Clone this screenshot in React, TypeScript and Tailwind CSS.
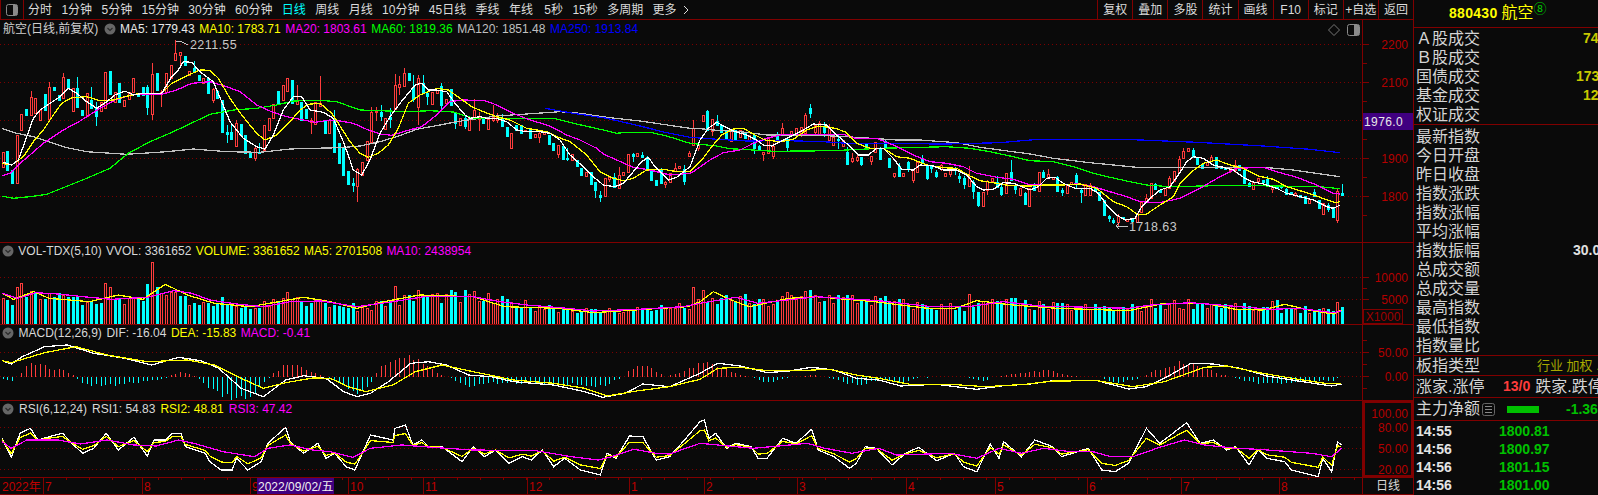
type Pt = [number, number];
type Seg = [number, number, number, number, number[]];

// chart data was read off crops: each segment is offset + scale + flat x,y list
function build(segs: Seg[]): Pt[] {
  const out: Pt[] = [];
  for (const [ox, oy, sx, sy, f] of segs) {
    for (let i = 0; i < f.length; i += 2) {
      const p: Pt = [ox + f[i] / sx, oy + f[i + 1] / sy];
      if (!out.length || p[0] > out[out.length - 1][0]) out.push(p);
    }
  }
  return out;
}

function at(line: Pt[], x: number) {
  if (x <= line[0][0]) return line[0][1];
  for (let i = 1; i < line.length; i++) {
    if (x <= line[i][0]) {
      const [x0, y0] = line[i - 1];
      const [x1, y1] = line[i];
      return y0 + ((y1 - y0) * (x - x0)) / (x1 - x0);
    }
  }
  return line[line.length - 1][1];
}

const toPts = (line: Pt[]) => line.map(([x, y]) => `${x.toFixed(1)},${y.toFixed(1)}`).join(" ");

let seed = 7;
const rnd = () => {
  seed = (seed * 16807) % 2147483647;
  return seed / 2147483647;
};

const ma5 = build([
  [0, 35, 3, 3, [8,382,35,390,55,375,75,320,100,250,120,225,150,205,180,185,205,160,230,175,260,200,290,220,320,200,345,180,375,168,400,180,430,175,485,175,515,125,535,105,550,80,575,82,600,110,640,140,665,200,690,260,730,310,770,335,795,342,820,300,850,225,880,185,905,185,930,225,970,232,1000,250,1030,320,1050,375]],
  [340, 60, 3, 3, [20,290,40,330,65,345,90,300,120,220,150,170,180,130,205,100,225,75,245,70,265,90,290,90,320,95,345,130,375,165,390,175,420,170,440,175,470,175,500,185,530,210,560,215,600,215,630,220,660,240,690,285,730,320,760,350,790,375,825,380,850,370,880,335,905,305,925,292,945,320,985,360,1010,352,1050,320]],
  [680, 90, 3, 3, [30,225,60,150,85,115,110,97,135,110,165,125,200,135,230,150,250,165,275,168,300,155,330,140,370,120,400,102,440,105,470,135,505,165,535,195,565,195,590,175,610,175,640,205,665,238,700,240,720,225,760,228,790,240,830,240,860,255,890,290,910,300,940,298,970,278,1000,280,1050,300]],
  [1010, 90, 3, 3, [60,305,85,290,110,265,135,262,160,280,195,295,240,295,265,310,290,345,320,375,345,390,375,385,395,350,420,325,450,300,480,290,505,255,530,215,550,200,580,205,610,225,640,232,670,240,700,262,725,275,760,282,800,295,830,310,870,320,910,330,950,350,970,355,990,345]],
]);
const ma10 = build([
  [0, 35, 3, 3, [5,385,35,390,70,365,100,320,130,285,160,240,185,205,215,188,260,185,300,197,340,195,375,185,420,175,485,175,515,145,570,118,600,105,630,106,655,130,690,190,725,240,770,295,795,315,830,300,870,260,900,225,925,208,960,205,995,235,1015,265]],
  [340, 60, 3, 3, [30,245,60,280,85,292,115,280,145,255,175,205,205,130,240,105,290,85,325,90,360,115,395,140,430,155,470,170,510,180,560,205,620,215,650,230,690,245,740,285,780,335,820,355,850,362,880,355,920,330,970,328,1010,335,1050,335]],
  [680, 90, 3, 3, [30,235,65,210,95,170,125,135,160,117,190,115,225,135,255,150,300,155,340,148,380,120,415,108,465,115,495,125,530,160,570,175,610,175,650,200,690,205,740,225,790,233,830,235,870,258,900,272,950,280,990,287,1050,288]],
  [1010, 90, 3, 3, [60,295,100,285,160,285,210,282,260,295,310,335,350,350,385,375,410,372,450,345,490,320,510,280,545,245,580,220,620,210,660,225,700,235,745,258,790,268,830,290,880,305,930,322,975,338,990,335]],
]);
const ma20 = build([
  [0, 35, 3, 3, [5,422,30,415,60,385,90,360,130,325,190,285,240,258,300,220,345,195,400,178,485,178,530,165,575,145,630,140,680,155,720,170,770,210,810,228,860,245,910,255,945,262,990,255,1020,258]],
  [340, 60, 3, 3, [40,190,80,208,120,222,155,226,200,212,245,200,290,165,330,125,370,120,435,122,470,135,520,160,570,180,630,198,680,225,720,240,770,265,790,282,830,300,880,322,930,330,990,345,1050,340]],
  [680, 90, 3, 3, [40,245,90,210,130,188,180,180,220,160,260,145,310,133,400,133,490,133,525,145,590,145,640,165,700,195,750,215,800,220,850,230,890,250,950,262,1000,268,1050,285]],
  [1010, 90, 3, 3, [60,285,150,285,200,282,250,290,300,305,350,320,390,335,450,338,510,325,570,295,630,260,680,235,760,232,800,245,860,262,920,285,970,310,990,312]],
]);
const ma60 = build([
  [0, 35, 3, 3, [5,483,40,490,90,485,140,478,190,458,260,430,330,400,385,355,450,320,520,290,580,262,630,238,700,225,770,220,830,210,880,198,960,196,1010,200]],
  [340, 60, 3, 3, [60,150,120,152,200,155,270,152,340,156,400,175,640,175,700,190,790,210,830,220,860,217,930,217,980,228,1050,250]],
  [680, 90, 3, 3, [50,162,110,168,150,176,220,180,280,184,460,182,500,180,600,175,800,170,870,175,930,185,990,198,1050,212]],
  [1010, 90, 3, 3, [60,212,130,215,190,230,250,250,300,262,360,275,410,285,480,290,620,287,730,287,930,290,990,296]],
]);
const ma120 = build([
  [0, 35, 3, 3, [5,280,50,295,100,305,150,322,200,338,260,350,380,358,500,350,580,342,680,350,780,352,870,342,940,340,1020,338]],
  [340, 60, 3, 3, [60,258,120,245,170,230,230,208,300,195,350,185,400,178,470,168,560,162,660,155,720,160,800,172,900,183,1050,205]],
  [680, 90, 3, 3, [50,115,100,120,180,125,260,135,400,135,530,142,650,150,720,150,830,158,900,172,960,180,1050,192]],
  [1010, 90, 3, 3, [60,198,130,205,240,218,380,232,560,232,760,232,850,240,990,260]],
]);
const ma250 = build([
  [340, 60, 3, 3, [615,145,700,160,800,175,900,198,980,218,1050,232]],
  [680, 90, 3, 3, [100,147,200,153,320,152,430,155,500,160,800,162,960,158,1050,150]],
  [1010, 90, 3, 3, [100,148,340,148,560,157,760,168,900,178,990,188]],
]);

const volMa5 = build([
  [0, 240, 2.24, 3, [5,160,30,178,75,155,110,175,200,185,265,165,320,178,370,133,420,165,480,190,560,200,680,172,740,185,800,205,860,185,940,165,1060,170,1130,200,1250,205,1330,218,1480,205,1540,200,1568,185]],
  [700, 240, 2.24, 3, [30,155,70,180,110,200,200,175,260,170,390,185,510,205,570,205,620,182,700,195,800,205,960,212,1040,190,1130,190,1200,208,1260,210,1310,193,1370,212,1420,222,1437,210]],
]);
const volMa10 = build([
  [0, 240, 2.24, 3, [5,160,40,175,80,158,130,162,200,172,250,178,330,172,390,152,430,160,470,180,530,192,590,200,650,185,720,183,800,200,880,185,950,170,1060,170,1120,185,1180,195,1270,205,1330,213,1430,208,1530,200,1568,190]],
  [700, 240, 2.24, 3, [80,172,130,190,260,170,400,182,520,200,600,200,680,185,760,198,960,205,1010,195,1100,188,1280,208,1340,205,1420,218,1437,212]],
]);

const dif = build([
  [0, 240, 2.24, 3, [5,362,25,372,50,350,100,320,150,315,210,340,280,355,340,375,400,352,450,362,490,385,540,445,590,470,640,420,680,407,730,415,770,455,800,470,830,460,870,425,920,370,960,365,1000,375,1050,405,1100,410,1150,425,1240,435,1310,455,1350,472,1400,460,1440,432,1500,440,1568,400]],
  [700, 240, 2.24, 3, [40,370,90,378,150,398,200,393,250,382,300,390,350,415,400,420,450,438,530,433,620,448,680,437,740,432,790,422,890,422,960,447,1000,440,1040,415,1100,370,1150,372,1210,385,1270,408,1350,425,1415,438,1437,432]],
]);
const dea = build([
  [0, 240, 2.24, 3, [5,362,25,368,100,338,170,320,240,345,330,365,420,360,480,375,540,415,590,445,640,428,700,414,740,415,780,440,820,455,880,435,930,395,990,375,1060,395,1150,420,1240,430,1310,445,1360,468,1430,452,1500,440,1568,418]],
  [700, 240, 2.24, 3, [40,385,90,382,150,392,220,392,290,388,350,405,400,415,470,433,560,433,640,440,730,433,790,423,890,422,970,440,1040,425,1130,382,1180,378,1260,400,1340,418,1400,430,1437,431]],
]);
const hist = build([
  [0, 0, 2.24, 1, [5,-5,25,-15,40,0,65,40,100,32,160,10,180,-20,225,-30,300,-20,370,-5,400,15,440,0,460,-25,500,-60,520,-65,560,-60,600,-10,610,10,650,45,690,15,730,0,760,-20,800,-55,825,-30,850,35,910,65,950,40,985,5,1010,-5,1040,-30,1100,-20,1200,-20,1350,-30,1390,-5,1420,30,1440,35,1490,0,1530,15,1568,40]],
  [700, 0, 2.24, 1, [40,35,90,5,120,-5,150,-20,190,-5,250,5,290,-5,355,-32,400,-8,460,-18,490,-3,600,-2,630,-15,660,0,700,8,785,18,830,2,890,0,930,-20,975,-10,990,0,1020,20,1090,50,1160,8,1190,0,1240,-22,1320,-20,1420,-12,1430,0]],
]);

const rsi1 = build([
  [0, 240, 2.24, 3, [5,595,25,652,45,580,68,565,85,600,110,590,140,580,165,615,185,640,210,625,238,580,265,630,300,592,330,648,345,600,370,600,385,580,405,580,415,620,460,640,470,665,495,690,520,690,530,655,555,690,585,665,600,610,640,562,650,605,680,640,712,610,730,655,750,640,775,680,795,690,830,585,880,600,885,565,908,555,925,615,945,600,960,620,990,620,1010,640,1035,665,1060,620,1085,650,1110,630,1140,670,1170,650,1190,660,1215,630,1240,680,1265,655,1300,690,1345,705,1360,640,1380,655,1410,588,1440,590,1470,660,1500,650,1530,605,1568,545]],
  [700, 240, 2.24, 3, [10,540,20,595,35,580,60,625,80,610,115,620,130,655,150,655,185,595,215,610,250,568,265,630,300,650,335,685,350,670,370,620,395,625,430,675,460,640,490,622,530,662,570,640,590,680,620,695,650,612,670,655,680,605,720,650,750,600,790,620,810,650,870,625,900,690,930,695,960,670,1000,565,1030,610,1090,548,1120,610,1150,600,1180,630,1200,620,1230,675,1250,630,1270,655,1310,665,1325,690,1385,710,1395,655,1415,695,1428,605,1437,615]],
]);
const rsi3 = build([
  [0, 240, 2.24, 3, [5,605,25,625,60,600,130,600,180,612,240,600,300,615,350,618,400,600,440,612,500,635,570,650,600,625,650,615,700,630,740,635,790,652,830,625,900,615,950,620,1000,625,1060,630,1200,632,1280,650,1340,660,1370,650,1420,628,1470,640,1500,642,1568,610]],
  [700, 240, 2.24, 3, [40,615,120,625,160,620,240,610,280,625,340,640,400,625,440,645,560,640,620,655,670,625,720,640,770,625,830,635,880,635,920,650,970,650,1030,622,1085,600,1130,615,1200,625,1250,628,1370,640,1415,650,1437,625]],
]);
const rsi2: Pt[] = rsi1.map(([x, y]) => [x, y * 0.58 + at(rsi3, x) * 0.42]);

type C = [number, number, number, number, number?, number?];
const zoomCandles: [number, number, C[]][] = [
  [0, 35, [[7,350,395,1],[20,348,405,0],[35,405,443,0],[49,300,445,1],[65,237,285,1],[77,222,240,0],[92,185,240,1,168],[107,190,235,1],[118,225,255,1],[134,178,225,0],[148,155,250,1,140],[160,155,165,0],[175,180,195,0],[190,127,190,1,113],[203,132,160,0],[217,160,230,1],[233,160,218,0,127],[245,225,240,0],[259,175,245,1],[274,195,218,0,155],[289,220,245,0,200,272],[303,200,228,1],[316,112,220,1],[332,108,178,0],[345,170,200,1],[358,143,200,0],[373,195,212,1],[387,170,190,1],[401,130,172,1],[416,175,185,0],[428,155,180,0],[443,155,215,0,150,240],[457,118,237,1,85,255],[470,115,165,0],[485,170,175,1,165,215],[500,113,170,1],[513,90,130,1],[526,55,77,1,15],[541,52,60,1,50,95],[553,62,90,0],[568,108,120,1],[584,100,112,0,78],[598,120,135,0],[611,130,145,1],[626,130,175,0],[641,163,195,1,160,205],[652,168,190,0],[667,195,292,0],[682,290,296,0,270,325],[695,292,312,0,268],[710,265,335,1,255],[724,268,300,0],[737,300,355,0],[752,352,368,0],[767,338,368,1,335,378],[780,352,355,0,325],[795,270,345,1],[808,248,285,1],[820,208,250,1],[835,168,208,0],[850,150,195,1],[865,130,170,1],[877,135,205,0],[892,195,208,1,150],[908,200,255,0],[920,222,250,0],[934,255,262,1,250,298],[946,200,265,1],[961,205,215,1,123],[976,255,295,0],[992,255,295,1],[1004,255,350,0,225],[1018,325,385,0]]],
  [340, 60, [[12,262,345,0],[25,332,372,0],[40,370,375,0,355,395],[55,328,380,1,325,425],[67,305,345,1],[82,242,300,1],[97,155,245,1,140],[110,152,156,1,140,182],[125,155,168,0,135,182],[140,175,208,1],[155,172,178,0,145,205],[166,75,147,1,42,150],[181,72,80,1,48,105],[196,40,80,1,25],[208,40,60,0],[223,80,115,0,45,125],[238,55,143,1,45,195],[252,70,100,0,45],[266,100,110,0,95,135],[280,95,130,1],[293,90,100,1],[307,78,135,0,70,150],[322,118,130,1],[334,88,135,0],[350,160,190,0,155,207],[362,175,195,1],[376,175,198,0,165,207],[391,175,212,1],[406,150,170,1,118],[421,170,175,1,155,212],[433,172,190,0],[448,178,207,1],[463,170,178,1,135,185],[476,172,180,1,160,190],[490,175,200,0,162],[505,200,228,0],[517,218,264,1],[532,195,210,0],[547,195,220,0],[560,210,214,1],[574,203,232,0],[589,222,230,1],[600,220,232,1,215,248],[616,215,220,1],[631,225,252,0],[643,250,272,0],[658,255,282,1,255,295],[673,257,295,0],[688,295,297,0,265,302],[700,282,300,1],[715,300,318,0],[730,325,345,0],[742,337,350,1],[757,337,373,0],[772,365,388,0,365,415],[784,405,412,0,392,425],[799,355,410,1],[814,352,358,1,350,365],[827,350,380,0,340],[841,345,385,1,322],[856,335,345,1],[868,282,335,1],[883,283,290,0,278,305],[898,280,290,1],[910,285,290,0,276],[925,290,330,0,288],[940,330,360,0],[952,360,375,0],[967,330,368,0,325],[982,365,370,1,362,385],[997,340,368,1],[1010,325,335,1,308],[1024,318,325,1],[1040,290,325,1]]],
  [680, 90, [[33,190,200,1,182],[47,115,165,1,90],[62,97,125,1],[73,76,95,1],[88,63,120,0,60],[103,88,125,1,88,138],[115,92,105,0,75],[130,105,125,0],[145,120,148,0],[157,118,155,1],[172,120,150,0],[187,120,142,1],[200,130,145,0],[214,135,150,1],[229,135,175,0,130,192],[244,172,185,0,165,207],[256,187,193,1,187,212],[271,143,187,1],[286,140,165,1],[298,138,150,0,125],[313,115,135,1,98],[328,118,135,0,92],[340,122,135,1],[355,115,130,1],[370,118,125,0,95],[382,75,128,1,70],[397,55,70,0,42,85],[412,75,120,0],[424,100,135,1,92],[439,110,125,0,95,140],[454,138,152,0],[466,142,165,1],[481,148,152,0,135,178],[496,155,175,0,135,180],[508,185,220,0,170,225],[523,205,215,1,190,220],[538,202,222,0,202,228],[553,158,192,1,148],[565,162,170,0],[580,155,185,1],[595,162,175,0],[607,178,207,0,170,210],[622,205,232,0],[637,235,262,0],[649,248,258,1,248,265],[664,250,258,1,250,262],[679,217,253,1],[691,215,235,0,212,245],[706,215,245,1],[721,210,215,0,205,220],[733,205,220,0,195],[748,228,233,0,225,248],[763,240,245,0,238,250],[775,245,258,0,240,265],[790,250,258,1,250,262],[805,237,252,1,235,262],[820,235,240,0,230,255],[832,257,262,0,250,278],[847,265,282,0,258,297],[862,265,288,1,228],[874,275,302,0,270,328],[889,305,345,0,305,352],[904,305,347,1],[916,272,298,1,270,315],[931,265,275,1],[946,275,290,0,258],[958,290,312,0,285,318],[973,250,310,1],[988,247,272,0,210],[1000,285,295,0,280,312],[1015,297,312,0,295,315]]],
  [1010, 90, [[10,285,297,0,280,312],[25,295,315,1],[40,308,340,0,305,345],[52,295,350,1],[67,285,300,0,278],[82,245,302,1],[94,245,260,0,240,265],[109,252,265,1,238],[124,262,268,1],[139,262,305,0,258],[151,300,305,0,295,318],[166,285,310,1],[178,277,282,1],[193,255,283,0,248,295],[208,300,305,0,298,340],[223,282,315,1],[235,285,315,1,280,318],[250,290,300,0],[265,305,328,0],[277,330,375,0],[292,378,385,0,375,395],[307,390,395,0,385,402],[319,377,395,1,372,412],[334,382,385,0],[349,388,393,1],[361,385,395,0],[376,368,395,1],[391,335,365,1],[406,325,335,1,312],[418,280,325,1],[433,283,298,0,280],[448,300,305,0],[460,295,315,1],[475,265,295,1,258],[490,243,272,1],[502,207,245,1,198],[517,183,205,1,175],[532,175,185,1],[544,180,200,0,175],[559,200,220,0],[574,222,235,0],[586,215,225,1],[601,200,212,1,195],[616,202,235,0],[628,228,235,0],[643,230,235,0],[658,235,240,1,232,248],[673,225,240,1,210,248],[685,225,240,0],[697,240,278,0],[715,280,290,0,275,292],[727,275,295,1],[742,265,275,1],[757,270,275,0],[769,268,285,0,258],[784,290,295,1,290,308],[799,285,295,0],[811,285,290,0,280,298],[826,298,312,0,295,315],[838,305,310,0],[853,310,316,1,305,320],[868,315,320,0],[883,318,338,0],[895,328,340,1],[922,330,355,0],[937,338,370,1],[952,345,358,0,340,365],[967,355,383,0],[982,303,390,1,298,398],[994,310,315,0,283,318]]],
];

const COUNT = 288;
const xOf = (i: number) => Math.round(2.7 + i * 4.667);

type Candle = { x: number; t: number; b: number; wt: number; wb: number; red: boolean; v: number };
const candles: Candle[] = Array.from({ length: COUNT }, (_, i) => {
  const x = xOf(i);
  const mid = at(ma5, x) + (rnd() - 0.5) * 14;
  const h = 3 + rnd() * 10;
  const t = mid - h / 2;
  const b = mid + h / 2;
  const red = at(ma5, x + 5) < at(ma5, x) ? rnd() > 0.25 : rnd() > 0.75;
  return { x, t, b, wt: t - rnd() * 4, wb: b + rnd() * 4, red, v: 0 };
});
for (const [ox, oy, list] of zoomCandles) {
  for (const [zx, zt, zb, red, wt, wb] of list) {
    const real = ox + zx / 3;
    const i = Math.round((real - 2.7) / 4.667);
    if (i < 0 || i >= COUNT) continue;
    const t = oy + zt / 3;
    const b = oy + zb / 3;
    const c = candles[i];
    c.t = t;
    c.b = b;
    c.red = !!red;
    c.wt = wt === undefined ? t : oy + wt / 3;
    c.wb = wb === undefined ? b : oy + wb / 3;
  }
}

// volume bars: generated around the MA10 line, big ones overridden
candles.forEach((c) => {
  const base = 324 - at(volMa10, c.x);
  c.v = 324 - base * (0.72 + rnd() * 0.55);
});
const volZoom: [number, number, number][] = [[8,175,1],[22,180,0],[34,195,0],[50,142,1],[64,130,1],[76,170,0],[92,153,1],[106,155,0],[118,178,1],[134,177,0],[148,158,1],[160,170,0],[174,160,0],[188,165,1],[202,172,0],[216,172,0],[232,170,0],[246,195,0],[260,185,1],[274,185,0],[290,192,0],[302,190,0],[316,130,1],[330,142,1],[344,176,0],[358,177,0],[374,192,1],[386,175,1],[400,172,1],[414,172,0],[428,183,0],[442,132,0],[458,67,1],[470,142,0],[484,160,1],[500,165,1],[514,155,1],[526,155,1],[540,168,0],[554,168,0],[568,195,1],[584,188,0],[598,195,0],[612,185,1],[626,190,0],[640,197,0],[654,190,0],[668,172,0],[682,192,0],[696,190,0],[708,198,1],[722,203,0],[736,197,0],[752,207,0],[766,203,1],[780,203,0],[794,183,1],[806,197,1],[820,178,1],[834,187,0],[850,175,1],[866,155,1],[880,178,1],[894,172,1],[906,182,0],[920,198,0],[934,188,0],[948,180,1],[962,178,1],[976,188,0],[990,202,1],[1004,195,0],[1018,197,0],[1032,200,0],[1046,203,0]];
const volRed: Record<number, boolean> = {};
volZoom.forEach(([zx, zy, red]) => {
  const i = Math.round((zx / 3 - 2.7) / 4.667);
  candles[i].v = 240 + zy / 3;
  volRed[i] = !!red;
});
const volSpikes: [number, number, number][] = [[395,286,1],[418,290,1],[694,287,1],[704,290,1],[812,290,0],[806,291,1],[785,292,1],[968,294,1],[1149,299,1],[1271,301,1],[1276,300,0],[1337,302,1],[1342,307,0]];
volSpikes.forEach(([x, y, red]) => {
  const i = Math.round((x - 2.7) / 4.667);
  candles[i].v = y;
  volRed[i] = !!red;
});

const RED = "#ff3c3c";
const CYAN = "#00ffff";
const GRID = "#7c0000";
const MONTHS: [number, string][] = [[43,"7"],[142,"8"],[250,"9"],[348,"10"],[423,"11"],[527,"12"],[629,"1"],[704,"2"],[797,"3"],[906,"4"],[995,"5"],[1087,"6"],[1181,"7"],[1279,"8"]];

function Grid({ ys }: { ys: number[] }) {
  return (
    <>
      {ys.map((y) => (
        <line key={y} x1={0} x2={1362} y1={y + 0.5} y2={y + 0.5} stroke={GRID} strokeDasharray="1 3" />
      ))}
    </>
  );
}

function Line({ pts, color }: { pts: Pt[]; color: string }) {
  return <polyline points={toPts(pts)} fill="none" stroke={color} strokeWidth={1.25} />;
}

function Dot() {
  return (
    <svg width="12" height="12" viewBox="0 0 12 12" className="shrink-0">
      <circle cx="6" cy="6" r="5.5" fill="#666666" />
      <path d="M3.5 5 L6 7.5 L8.5 5" fill="none" stroke="#2a2a2a" strokeWidth="1.2" />
    </svg>
  );
}

function Legend({ items, className }: { items: [string, string][]; className?: string }) {
  return (
    <>
      {items.map(([t, c]) => (
        <span key={t} className={className} style={{ color: c }}>
          {t}
        </span>
      ))}
    </>
  );
}

function Axis({ top, height, labels, minor = [] }: { top: number; height: number; labels: [number, string][]; minor?: number[] }) {
  return (
    <svg width="50" height={height} viewBox={`1363 ${top} 50 ${height}`} className="block">
      {labels.map(([y, t]) => (
        <g key={t}>
          <line x1={1363} x2={1369} y1={y + 0.5} y2={y + 0.5} stroke="#800000" />
          <text x={1408} y={y + 4.5} textAnchor="end" fontSize="12" fill="#b40000">
            {t}
          </text>
        </g>
      ))}
      {minor.map((y) => (
        <line key={y} x1={1363} x2={1367} y1={y + 0.5} y2={y + 0.5} stroke="#800000" />
      ))}
    </svg>
  );
}

const TOOLS = ["分时","1分钟","5分钟","15分钟","30分钟","60分钟","日线","周线","月线","10分钟","45日线","季线","年线","5秒","15秒","多周期","更多"];
const BUTTONS = ["复权","叠加","多股","统计","画线","F10","标记","+自选","返回"];

function Toolbar() {
  return (
    <div className="flex h-[20px] items-center border-b border-[#800000] text-[12px] text-[#dcdcdc]">
      <div className="flex h-[19px] w-[24px] items-center justify-center border-x border-[#800000]">
        <svg width="12" height="12" viewBox="0 0 12 12">
          <rect x="0.5" y="0.5" width="11" height="11" rx="2" fill="none" stroke="#8a8a8a" />
          <rect x="7" y="1" width="4" height="10" fill="#8a8a8a" />
        </svg>
      </div>
      <div className="ml-[4px] flex items-center gap-[9.4px] whitespace-nowrap">
        {TOOLS.map((t) => (
          <span key={t} className={t === "日线" ? "text-[#00ffff]" : t === "5秒" ? "ml-[2px]" : ""}>
            {t}
          </span>
        ))}
        <span className="ml-[-3px]">
          <svg width="6" height="10" viewBox="0 0 6 10">
            <path d="M1 1 L5 5 L1 9" fill="none" stroke="#dcdcdc" />
          </svg>
        </span>
      </div>
      <div className="ml-auto flex h-full">
        {BUTTONS.map((b) => (
          <div key={b} className="flex w-[35.1px] items-center justify-center border-l border-[#800000] whitespace-nowrap">
            {b}
          </div>
        ))}
      </div>
    </div>
  );
}

function PricePane() {
  return (
    <div className="flex h-[223px] border-b border-[#800000]">
      <div className="relative w-[1362px] shrink-0">
        <div className="flex h-[17px] items-center pl-[3px] text-[12px] whitespace-nowrap text-[#d0d0d0]">
          <span className="w-[101px]">航空(日线,前复权)</span>
          <Dot />
          <div className="ml-[4px] flex gap-[4.6px]">
            <Legend
              items={[
                ["MA5: 1779.43", "#e8e8e8"],
                ["MA10: 1783.71", "#ffff00"],
                ["MA20: 1803.61", "#ff00ff"],
                ["MA60: 1819.36", "#00ff00"],
                ["MA120: 1851.48", "#c0c0c0"],
                ["MA250: 1913.84", "#0000ff"],
              ]}
            />
          </div>
        </div>
        <div className="absolute top-[4px] right-[2px] flex items-center gap-[7px]">
          <svg width="12" height="12" viewBox="0 0 12 12">
            <path d="M6 0.5 L11.5 6 L6 11.5 L0.5 6 Z" fill="none" stroke="#777777" />
          </svg>
          <svg width="13" height="12" viewBox="0 0 13 12">
            <rect x="0.5" y="0.5" width="12" height="11" rx="2" fill="none" stroke="#8a8a8a" />
            <rect x="7" y="1" width="5" height="10" fill="#8a8a8a" />
          </svg>
        </div>
        <svg width="1362" height="205" viewBox="0 37 1362 205" className="block" shapeRendering="crispEdges">
          <Grid ys={[44, 82, 120, 158, 196]} />
          {candles.map((c, i) => (
            <g key={i} stroke={c.red ? RED : CYAN}>
              <line x1={c.x + 0.5} x2={c.x + 0.5} y1={Math.round(c.wt)} y2={Math.round(c.t)} />
              <line x1={c.x + 0.5} x2={c.x + 0.5} y1={Math.round(c.b)} y2={Math.round(c.wb)} />
              <rect
                x={c.x - 1 + 0.5}
                y={Math.round(c.t) + 0.5}
                width={2}
                height={Math.max(1, Math.round(c.b - c.t))}
                fill={c.red ? "#0a0a0a" : CYAN}
              />
            </g>
          ))}
          <Line pts={ma120} color="#c0c0c0" />
          <Line pts={ma60} color="#00ff00" />
          <Line pts={ma250} color="#0000ff" />
          <Line pts={ma20} color="#ff00ff" />
          <Line pts={ma10} color="#ffff00" />
          <Line pts={ma5} color="#ffffff" />
          <polyline points="176,41 180,41 188,45" fill="none" stroke="#c0c0c0" />
          <polyline points="1119,223 1116,226 1119,229" fill="none" stroke="#c0c0c0" />
          <line x1={1116} x2={1128} y1={226.5} y2={226.5} stroke="#c0c0c0" />
          <g shapeRendering="auto">
            <text x={190} y={49} fontSize="12.5" letterSpacing="0.4" fill="#c8c8c8">
              2211.55
            </text>
            <text x={1129} y={231} fontSize="12.5" letterSpacing="0.4" fill="#c8c8c8">
              1718.63
            </text>
          </g>
        </svg>
      </div>
      <div className="relative w-[51px] border-l border-[#800000]">
        <Axis
          top={20}
          height={222}
          labels={[[44,"2200"],[82,"2100"],[158,"1900"],[196,"1800"]]}
          minor={[63,101,120,139,177,215]}
        />
        <div className="absolute top-[93px] left-0 flex h-[17px] w-[50px] items-center bg-[#400080] pl-[1px] text-[12px] tracking-[0.4px] text-[#e8e8e8]">
          1976.0
        </div>
      </div>
    </div>
  );
}

function VolPane() {
  return (
    <div className="flex h-[82px] border-b border-[#800000]">
      <div className="w-[1362px] shrink-0">
        <div className="flex h-[16px] items-center gap-[4.3px] pl-[2px] text-[12px] whitespace-nowrap">
          <Dot />
          <Legend
            items={[
              ["VOL-TDX(5,10)", "#d8d8d8"],
              ["VVOL: 3361652", "#d8d8d8"],
              ["VOLUME: 3361652", "#ffff00"],
              ["MA5: 2701508", "#ffff00"],
              ["MA10: 2438954", "#ff00ff"],
            ]}
          />
        </div>
        <svg width="1362" height="65" viewBox="0 259 1362 65" className="block" shapeRendering="crispEdges">
          <Grid ys={[277, 299]} />
          {candles.map((c, i) => {
            const red = volRed[i] ?? c.red;
            const top = Math.round(c.v);
            return (
              <rect
                key={i}
                x={c.x - 1 + 0.5}
                y={top + 0.5}
                width={2}
                height={324 - top}
                stroke={red ? RED : CYAN}
                fill={red ? "#0a0a0a" : CYAN}
              />
            );
          })}
          <Line pts={volMa5} color="#ffff00" />
          <Line pts={volMa10} color="#ff00ff" />
        </svg>
      </div>
      <div className="relative w-[51px] border-l border-[#800000]">
        <Axis top={243} height={81} labels={[[277,"10000"],[299,"5000"]]} minor={[288]} />
        <div className="absolute top-[66px] left-0 flex h-[15px] w-[40px] items-center justify-center border border-[#800000] text-[12px] text-[#a00000]">
          X1000
        </div>
      </div>
    </div>
  );
}

function MacdPane() {
  return (
    <div className="flex h-[76px] border-b border-[#800000]">
      <div className="w-[1362px] shrink-0">
        <div className="flex h-[16px] items-center gap-[4.5px] pl-[2px] text-[12px] whitespace-nowrap">
          <Dot />
          <Legend
            items={[
              ["MACD(12,26,9)", "#d8d8d8"],
              ["DIF: -16.04", "#d8d8d8"],
              ["DEA: -15.83", "#ffff00"],
              ["MACD: -0.41", "#ff00ff"],
            ]}
          />
        </div>
        <svg width="1362" height="59" viewBox="0 341 1362 59" className="block" shapeRendering="crispEdges">
          <Grid ys={[352, 376]} />
          {candles.map((c, i) => {
            const h = (at(hist, c.x) * (0.8 + rnd() * 0.35)) / 3;
            if (Math.abs(h) < 0.5 || c.x > 1340) return null;
            return (
              <line
                key={i}
                x1={c.x + 0.5}
                x2={c.x + 0.5}
                y1={376.5}
                y2={376.5 - h}
                stroke={h > 0 ? RED : CYAN}
              />
            );
          })}
          <Line pts={dif} color="#ffffff" />
          <Line pts={dea} color="#ffff00" />
        </svg>
      </div>
      <div className="w-[51px] border-l border-[#800000]">
        <Axis top={325} height={75} labels={[[352,"50.00"],[376,"0.00"]]} minor={[364,340,388]} />
      </div>
    </div>
  );
}

function RsiPane() {
  return (
    <div className="flex h-[77px] border-b border-[#800000]">
      <div className="w-[1362px] shrink-0">
        <div className="flex h-[16px] items-center gap-[5px] pl-[2px] text-[12px] whitespace-nowrap">
          <Dot />
          <Legend
            items={[
              ["RSI(6,12,24)", "#d8d8d8"],
              ["RSI1: 54.83", "#d8d8d8"],
              ["RSI2: 48.81", "#ffff00"],
              ["RSI3: 47.42", "#ff00ff"],
            ]}
          />
        </div>
        <svg width="1362" height="60" viewBox="0 417 1362 60" className="block" shapeRendering="crispEdges">
          <Grid ys={[427, 448, 469]} />
          <Line pts={rsi1} color="#ffffff" />
          <Line pts={rsi2} color="#ffff00" />
          <Line pts={rsi3} color="#ff00ff" />
        </svg>
      </div>
      <div className="w-[51px] border-l border-[#800000]">
        <div className="h-[76px] w-[50px] border-2 border-[#800000]">
          <svg width="46" height="72" viewBox="1365 403 46 72" className="block">
            {([[413,"100.00"],[427,"80.00"],[448,"50.00"],[469,"20.00"]] as [number, string][]).map(([y, t]) => (
              <text key={t} x={1408} y={y + 4.5} textAnchor="end" fontSize="12" fill="#b40000">
                {t}
              </text>
            ))}
          </svg>
        </div>
      </div>
    </div>
  );
}

function TimeAxis() {
  const ticks: number[] = [];
  for (let x = 20; x < 1362; x += 23) ticks.push(x);
  return (
    <div className="flex h-[17px] border-b border-[#800000]">
      <div className="w-[1362px] shrink-0">
        <svg width="1362" height="16" viewBox="0 478 1362 16" className="block">
          <g shapeRendering="crispEdges">
            {ticks.map((x) => (
              <line key={x} x1={x + 0.5} x2={x + 0.5} y1={478} y2={480} stroke="#800000" />
            ))}
            {MONTHS.map(([x]) => (
              <line key={x} x1={x + 0.5} x2={x + 0.5} y1={478} y2={494} stroke="#800000" />
            ))}
          </g>
          <text x={2} y={491} fontSize="12" fill="#c00000">
            2022年
          </text>
          {MONTHS.map(([x, t]) => (
            <text key={x} x={x + 2} y={491} fontSize="12" fill="#c00000">
              {t}
            </text>
          ))}
          <rect x={257} y={478} width={77} height={16} fill="#400080" />
          <text x={258} y={491} fontSize="12" fill="#f0f0f0">
            2022/09/02/五
          </text>
        </svg>
      </div>
      <div className="flex w-[51px] items-center justify-center border-l border-[#800000] text-[12px] text-[#d8d8d8]">
        日线
      </div>
    </div>
  );
}

function Row({ label, value, left, color = "text-[#c8c800]" }: { label: string; value?: string; left?: number; color?: string }) {
  return (
    <div className="flex h-[19px] items-center whitespace-nowrap">
      <span className="w-[63px] shrink-0 pl-[2px] text-[16px] leading-[19px] text-[#d4d4d4]">{label}</span>
      {value && (
        <span className={`text-[14px] font-bold ${color}`} style={{ marginLeft: left }}>
          {value}
        </span>
      )}
    </div>
  );
}

const TICKS: [string, string][] = [["14:55","1800.81"],["14:56","1800.97"],["14:56","1801.15"],["14:56","1801.00"]];

function SidePanel() {
  return (
    <div className="w-[185px] shrink-0 overflow-hidden border-l border-[#800000]">
      <div className="flex h-[28px] items-start border-b border-[#800000] pt-[3px] pl-[35px] whitespace-nowrap text-[#ffff00]">
        <span className="text-[14px] leading-[20px] font-bold tracking-[0.3px]">880430</span>
        <span className="ml-[4px] text-[16px] leading-[20px]">航空</span>
        <span className="text-[13px] leading-[12px] text-[#00d000]">⑧</span>
      </div>
      <div className="h-[97px] border-b border-[#800000] pt-[1px]">
        <Row label="Ａ股成交" value="74" left={106} />
        <Row label="Ｂ股成交" />
        <Row label="国债成交" value="173" left={99} />
        <Row label="基金成交" value="12" left={106} />
        <Row label="权证成交" />
      </div>
      <div className="h-[231px] border-b border-[#800000] pt-[2px]">
        <Row label="最新指数" />
        <Row label="今日开盘" />
        <Row label="昨日收盘" />
        <Row label="指数涨跌" />
        <Row label="指数涨幅" />
        <Row label="平均涨幅" />
        <Row label="指数振幅" value="30.0" left={96} color="text-[#e0e0e0]" />
        <Row label="总成交额" />
        <Row label="总成交量" />
        <Row label="最高指数" />
        <Row label="最低指数" />
        <Row label="指数量比" />
      </div>
      <div className="flex h-[20px] items-center border-b border-[#800000] whitespace-nowrap">
        <span className="w-[63px] shrink-0 pl-[2px] text-[16px] text-[#d4d4d4]">板指类型</span>
        <span className="ml-[60px] text-[13px] text-[#a8a800]">行业 加权 .</span>
      </div>
      <div className="flex h-[22px] items-center border-b border-[#800000] whitespace-nowrap">
        <span className="w-[67px] shrink-0 pl-[2px] text-[16px] text-[#d4d4d4]">涨家.涨停</span>
        <span className="ml-[22px] text-[14px] font-bold text-[#ff3c3c]">13/0</span>
        <span className="ml-[5px] text-[16px] text-[#d4d4d4]">跌家.跌停</span>
      </div>
      <div className="flex h-[23px] items-center border-b border-[#800000] whitespace-nowrap">
        <span className="w-[65px] shrink-0 pl-[2px] text-[16px] text-[#d4d4d4]">主力净额</span>
        <svg width="13" height="13" viewBox="0 0 13 13" className="ml-[3px] shrink-0">
          <rect x="0.5" y="0.5" width="12" height="12" rx="2" fill="none" stroke="#666666" />
          <path d="M3 3.5 H10 M3 6.5 H10 M3 9.5 H10" stroke="#888888" />
        </svg>
        <div className="ml-[12px] h-[7px] w-[32px] shrink-0 bg-[#00c000]" />
        <span className="ml-[27px] text-[14px] font-bold text-[#00c000]">-1.36</span>
      </div>
      <div className="pt-[1px]">
        {TICKS.map(([t, v], i) => (
          <div key={i} className="flex h-[18px] items-center whitespace-nowrap text-[14px] font-bold">
            <span className="w-[85px] pl-[2px] text-[#e4e4e4]">{t}</span>
            <span className="text-[#00c000]">{v}</span>
          </div>
        ))}
      </div>
    </div>
  );
}

export default function App() {
  return (
    <div className="flex h-[495px] w-[1598px] overflow-hidden bg-[#0a0a0a] font-['Liberation_Sans','Noto_Sans_CJK_SC',sans-serif]">
      <div className="w-[1413px] shrink-0">
        <Toolbar />
        <PricePane />
        <VolPane />
        <MacdPane />
        <RsiPane />
        <TimeAxis />
      </div>
      <SidePanel />
    </div>
  );
}
